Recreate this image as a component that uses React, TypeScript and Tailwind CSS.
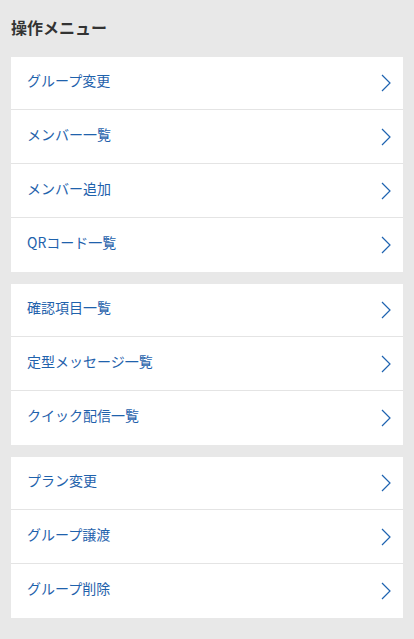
const groups: string[][] = [
  ['グループ変更', 'メンバー一覧', 'メンバー追加', 'QRコード一覧'],
  ['確認項目一覧', '定型メッセージ一覧', 'クイック配信一覧'],
  ['プラン変更', 'グループ譲渡', 'グループ削除'],
];

function Chevron() {
  return (
    <svg width="10" height="18" viewBox="0 0 10 18" fill="none" className="shrink-0">
      <polyline points="1,1 9,9 1,17" stroke="#1e63b0" strokeWidth="1.2" />
    </svg>
  );
}

export default function App() {
  return (
    <div
      className="min-h-[639px] bg-[#e8e8e8] px-[11px] pt-[15px] pb-5"
      style={{ fontFamily: '"Noto Sans CJK JP", "Noto Sans", sans-serif' }}
    >
      <h1 className="text-[16px] leading-[24px] font-bold text-[#333333] mb-[18px]">操作メニュー</h1>

      <div className="flex flex-col gap-3">
        {groups.map((items, gi) => (
          <div key={gi} className="bg-white divide-y divide-[#e4e4e4]">
            {items.map((label) => (
              <div
                key={label}
                className="h-[54px] first:h-[53px] flex items-center justify-between pl-4 pr-[12px]"
              >
                <span className="text-[14px] leading-[20px] text-[#1f62ac] -mt-[6px]">{label}</span>
                <Chevron />
              </div>
            ))}
          </div>
        ))}
      </div>
    </div>
  );
}
